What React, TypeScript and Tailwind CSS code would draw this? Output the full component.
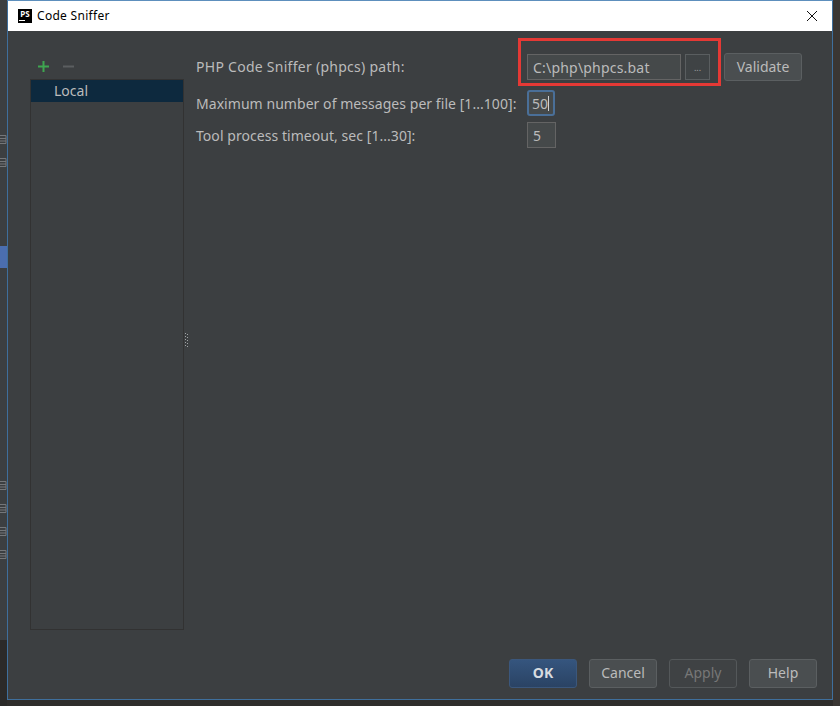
import React from 'react';

const FONT = "font-['Noto_Sans','Open_Sans',sans-serif]";

const FooterButton = ({ label, kind }: { label: string; kind?: 'primary' | 'disabled' }) => {
  let cls = 'bg-[#4a4e50] border-[#5b5f61] text-[#bbbbbb]';
  if (kind === 'primary') cls = 'bg-gradient-to-b from-[#35557e] to-[#2a4364] border-[#3b577c] text-[#d8dce0] font-bold';
  if (kind === 'disabled') cls = 'bg-[#3f4244] border-[#54585a] text-[#777777]';
  return (
    <button className={`w-[68px] h-[29px] pb-[2px] rounded-[3px] border text-[14px] leading-none flex items-center justify-center ${cls}`}>
      {label}
    </button>
  );
};

const Field = ({ value, focused, width, wide }: { value: string; focused?: boolean; width: string; wide?: boolean }) => (
  <div
    className={`${width} h-[26px] flex items-center text-[14px] text-[#bbbbbb] bg-[#45494a] ${
      focused ? 'border-2 border-[#4a6f98] rounded-[3px] pl-[3px]' : 'border border-[#646464] pl-[5px]'
    } ${wide ? 'tracking-[0.2px]' : ''}`}
  >
    {value}
    {focused && <span className="w-px h-[15px] bg-[#d0d0d0]" />}
  </div>
);

const SideGlyph = () => (
  <svg className="shrink-0" width="7" height="11" viewBox="0 0 7 11" fill="none" stroke="#74777a" strokeWidth="1">
    <path d="M0 1.5h6v8H0M0 4.5h6M0 7h6" />
  </svg>
);

const App: React.FC = () => {
  return (
    <div className={`${FONT} w-[840px] h-[706px] flex overflow-hidden bg-[#2f2d2b]`}>
      {/* IDE behind the dialog */}
      <div className="w-[7px] h-full bg-[#3c3f41] flex flex-col">
        <div className="h-[134px] shrink-0" />
        <SideGlyph />
        <div className="h-[12px] shrink-0" />
        <SideGlyph />
        <div className="h-[78px] shrink-0" />
        <div className="h-[22px] bg-[#4b6eaf] shrink-0" />
        <div className="h-[212px] shrink-0" />
        <SideGlyph />
        <div className="h-[12px] shrink-0" />
        <SideGlyph />
        <div className="h-[12px] shrink-0" />
        <SideGlyph />
        <div className="h-[12px] shrink-0" />
        <SideGlyph />
        <div className="flex-1" />
        <div className="h-[66px] bg-[#2b2a29] shrink-0" />
      </div>

      <div className="w-[826px] flex flex-col">
        <div className="h-[700px] flex flex-col border border-[#3f6f9c] border-t-[#5d8fbd] relative">
          <div className="h-[30px] bg-white flex items-center pl-[10px] pr-[14px] shrink-0">
            <div className="w-[14px] h-[14px] bg-black flex flex-col items-center justify-start overflow-hidden">
              <span className="text-white text-[8px] font-bold leading-[10px]">PS</span>
              <span className="w-[6px] h-px bg-white self-start ml-[1px] mt-[1px]" />
            </div>
            <span className="ml-[5px] text-[12px] text-black tracking-[0.3px]">Code Sniffer</span>
            <svg className="ml-auto" width="12" height="12" viewBox="0 0 12 12" fill="none" stroke="#111" strokeWidth="1">
              <path d="M1 1l10 10M11 1L1 11" />
            </svg>
          </div>

          <div className="flex-1 bg-[#3c3f41] flex flex-col min-h-0">
            <div className="flex-1 flex pl-[22px] pt-[22px] min-h-0">
              {/* left list */}
              <div className="w-[154px] flex flex-col pb-[29px]">
                <div className="h-[26px] flex items-center gap-[12px] pl-[7px] shrink-0">
                  <svg width="13" height="13" viewBox="0 0 13 13">
                    <path d="M6.5 1v11M1 6.5h11" stroke="#3ea650" strokeWidth="2" />
                  </svg>
                  <svg width="13" height="13" viewBox="0 0 13 13">
                    <path d="M1 6.5h11" stroke="#5b5e60" strokeWidth="2" />
                  </svg>
                </div>
                <div className="flex-1 border border-[#323232]">
                  <div className="h-[22px] bg-[#0d293e] text-[14px] leading-[22px] text-[#bbbbbb] pl-[23px]">Local</div>
                </div>
              </div>

              {/* splitter */}
              <div className="w-[12px] flex items-center pl-[1px] pb-[31px]">
                <svg width="4" height="15" viewBox="0 0 4 15" fill="#a0a3a5">
                  <path d="M0 0h1v1H0zM2 1h1v1H2zM0 3h1v1H0zM2 4h1v1H2zM0 6h1v1H0zM2 7h1v1H2zM0 9h1v1H0zM2 10h1v1H2zM0 12h1v1H0zM2 13h1v1H2z" />
                </svg>
              </div>

              {/* form */}
              <div className="flex-1 relative text-[14px] text-[#bbbbbb]">
                <div className="absolute left-[322px] top-[-15px] w-[203px] h-[48px] border-[3px] border-[#e53935]" />
                <div className="flex items-center h-[28px]">
                  <span className="w-[331px] shrink-0 pb-[2px] tracking-[0.27px]">PHP Code Sniffer (phpcs) path:</span>
                  <Field value="C:\php\phpcs.bat" width="w-[154px]" wide />
                  <div className="ml-[4px] w-[25px] h-[26px] bg-[#3f4345] border border-[#5a5e60] flex items-center justify-center text-[9px] leading-none text-[#a0a0a0]">
                    ...
                  </div>
                  <button className="ml-[14px] w-[78px] h-[28px] pb-[2px] rounded-[3px] bg-[#4a4e50] border border-[#5b5f61] text-[14px] text-[#bbbbbb]">
                    Validate
                  </button>
                </div>
                <div className="flex items-center mt-[9px]">
                  <span className="w-[331px] shrink-0 tracking-[0.05px]">Maximum number of messages per file [1...100]:</span>
                  <Field value="50" focused width="w-[28px]" />
                </div>
                <div className="flex items-center mt-[6px]">
                  <span className="w-[331px] shrink-0 tracking-[0.05px]">Tool process timeout, sec [1...30]:</span>
                  <Field value="5" width="w-[29px]" />
                </div>
              </div>
            </div>

            <div className="h-[40px] flex justify-end gap-[12px] pr-[15px] shrink-0">
              <FooterButton label="OK" kind="primary" />
              <FooterButton label="Cancel" />
              <FooterButton label="Apply" kind="disabled" />
              <FooterButton label="Help" />
            </div>
          </div>
        </div>
      </div>

      <div className="w-[7px] h-full bg-[#3a3633]" />
    </div>
  );
};

export default App;
